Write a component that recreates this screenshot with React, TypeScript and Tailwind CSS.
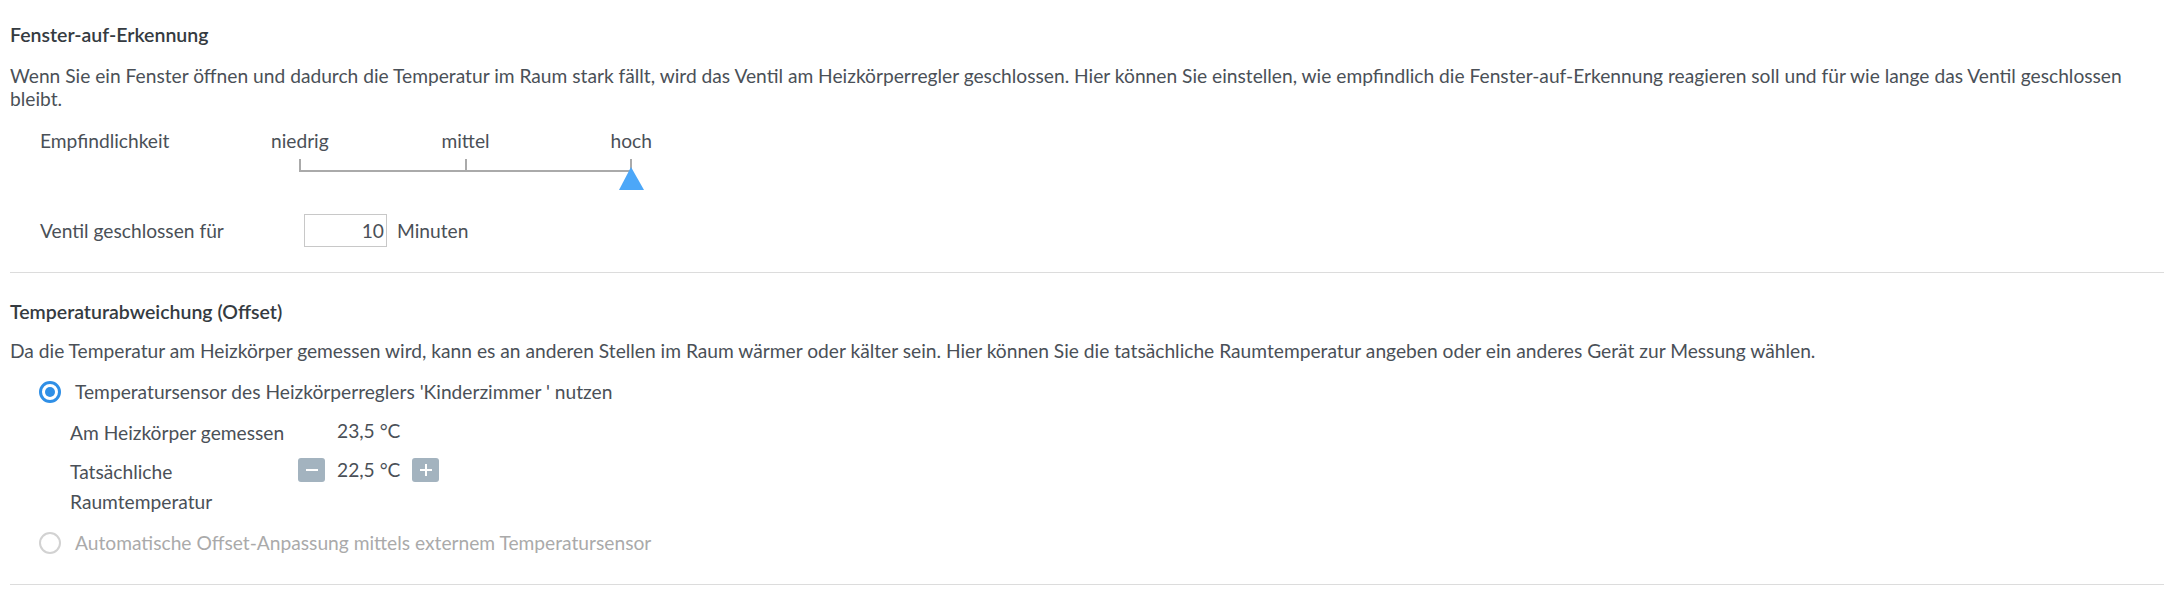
const font = { fontFamily: '"Lato", "Noto Sans", sans-serif' };

function Radio({ checked }: { checked: boolean }) {
  if (checked) {
    return (
      <span className="flex h-[22px] w-[22px] shrink-0 items-center justify-center rounded-full border-[3px] border-[#2f8fe6] bg-white">
        <span className="h-[10px] w-[10px] rounded-full bg-[#2f8fe6]" />
      </span>
    );
  }
  return (
    <span className="h-[22px] w-[22px] shrink-0 rounded-full border-[2.5px] border-[#d2d2d2] bg-white" />
  );
}

function StepButton({ sign }: { sign: "minus" | "plus" }) {
  return (
    <button
      type="button"
      className="flex h-[24px] w-[27px] items-center justify-center rounded-[3px] bg-[#a3b3bf]"
    >
      <svg width="14" height="14" viewBox="0 0 14 14">
        <path d="M1 7h12" stroke="#fff" strokeWidth="2" />
        {sign === "plus" && <path d="M7 1v12" stroke="#fff" strokeWidth="2" />}
      </svg>
    </button>
  );
}

function SensitivitySlider() {
  return (
    <div className="w-[497px]">
      <div className="grid grid-cols-3 text-center leading-[23px]">
        <span>niedrig</span>
        <span>mittel</span>
        <span>hoch</span>
      </div>
      <svg width="497" height="40" viewBox="0 0 497 40" className="block">
        <path d="M83 19H414" stroke="#aaaaaa" strokeWidth="2" />
        <path d="M83 7v13M249 7v13M414 7v13" stroke="#aaaaaa" strokeWidth="2" />
        <path d="M414 15L402 38H427Z" fill="#4ca7f8" />
      </svg>
    </div>
  );
}

export default function App() {
  return (
    <div
      className="bg-white pl-[10px] pr-[19px] pt-[23px] text-[19.2px] text-[#4a5057]"
      style={font}
    >
      <section>
        <h3 className="text-[19.5px] font-semibold leading-[24px] text-[#353b41]">
          Fenster-auf-Erkennung
        </h3>
        <p className="mt-[17px] leading-[23px]">
          Wenn Sie ein Fenster öffnen und dadurch die Temperatur im Raum stark fällt, wird das
          Ventil am Heizkörperregler geschlossen. Hier können Sie einstellen, wie empfindlich die
          Fenster-auf-Erkennung reagieren soll und für wie lange das Ventil geschlossen bleibt.
        </p>

        <div className="mt-[19px] flex items-start pl-[30px]">
          <span className="w-[177px] leading-[23px]">Empfindlichkeit</span>
          <SensitivitySlider />
        </div>

        <div className="mt-[22px] flex h-[33px] items-center pl-[30px] leading-[23px]">
          <span className="w-[264px]">Ventil geschlossen für</span>
          <input
            type="text"
            defaultValue="10"
            className="h-[33px] w-[83px] border border-[#c8c8c8] bg-white pr-[2px] text-right text-[#4a5057] outline-none"
          />
          <span className="ml-[10px]">Minuten</span>
        </div>
      </section>

      <hr className="mt-[25px] border-t border-[#dcdcdc]" />

      <section>
        <h3 className="mt-[27px] text-[19.5px] font-semibold leading-[24px] text-[#353b41]">
          Temperaturabweichung (Offset)
        </h3>
        <p className="mt-[15px] leading-[23px]">
          Da die Temperatur am Heizkörper gemessen wird, kann es an anderen Stellen im Raum wärmer
          oder kälter sein. Hier können Sie die tatsächliche Raumtemperatur angeben oder ein anderes
          Gerät zur Messung wählen.
        </p>

        <label className="mt-[18px] flex items-center gap-[14px] pl-[29px] leading-[23px]">
          <Radio checked />
          <span>Temperatursensor des Heizkörperreglers 'Kinderzimmer ' nutzen</span>
        </label>

        <div className="mt-[15px] pl-[60px]">
          <div className="flex items-start">
            <span className="w-[228px] leading-[30px]">Am Heizkörper gemessen</span>
            <span className="pl-[39px] pt-[1px] leading-[24px]">23,5 °C</span>
          </div>
          <div className="mt-[9px] flex items-start">
            <span className="w-[228px] leading-[30px]">
              Tatsächliche Raumtemperatur
            </span>
            <div className="flex items-start gap-[12px] pt-[1px]">
              <StepButton sign="minus" />
              <span className="leading-[24px]">22,5 °C</span>
              <StepButton sign="plus" />
            </div>
          </div>
        </div>

        <label className="mt-[14px] flex items-center gap-[14px] pl-[29px] leading-[23px] text-[#aaaaaa]">
          <Radio checked={false} />
          <span>Automatische Offset-Anpassung mittels externem Temperatursensor</span>
        </label>
      </section>

      <hr className="mt-[30px] border-t border-[#dcdcdc]" />
    </div>
  );
}
